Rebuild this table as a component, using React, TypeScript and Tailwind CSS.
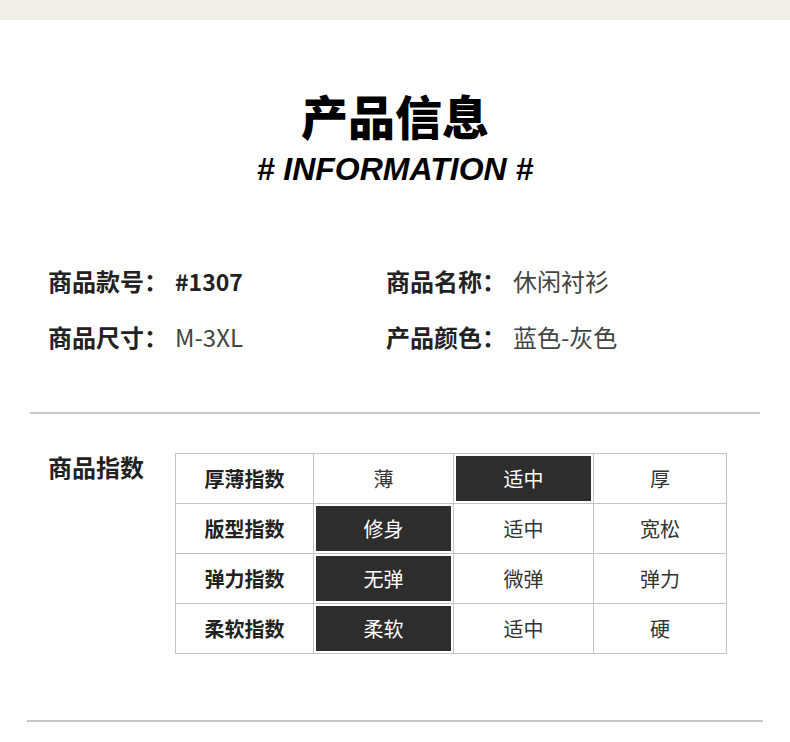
const cjk = "font-['Noto_Sans_CJK_SC','Noto_Sans',sans-serif]";

type Cell = { text: string; on?: boolean };

const rows: { label: string; cells: Cell[] }[] = [
  { label: "厚薄指数", cells: [{ text: "薄" }, { text: "适中", on: true }, { text: "厚" }] },
  { label: "版型指数", cells: [{ text: "修身", on: true }, { text: "适中" }, { text: "宽松" }] },
  { label: "弹力指数", cells: [{ text: "无弹", on: true }, { text: "微弹" }, { text: "弹力" }] },
  { label: "柔软指数", cells: [{ text: "柔软", on: true }, { text: "适中" }, { text: "硬" }] },
];

function InfoItem({ label, value, bold }: { label: string; value: string; bold?: boolean }) {
  return (
    <div className="flex items-center h-[34px]">
      <span className="text-[24px] font-bold text-[#222]">{label}：</span>
      <span className={`ml-[7px] ${bold ? "text-[23px] font-bold text-[#222]" : "text-[24px] text-[#444]"}`}>{value}</span>
    </div>
  );
}

export default function App() {
  return (
    <div className={`w-[790px] h-[742px] bg-white overflow-hidden ${cjk}`}>
      <div className="h-[20px] bg-[#f1ede8]" />

      <div className="flex flex-col items-center pt-[64px]">
        <div className="text-[47px] font-black leading-[62px] text-black">产品信息</div>
        <div className="mt-[3px] text-[32px] font-bold italic leading-[40px] text-black font-['Liberation_Sans',sans-serif]">
          # INFORMATION #
        </div>
      </div>

      <div className="grid grid-cols-[338px_1fr] pl-[48px] pt-[75px] gap-y-[22px]">
        <InfoItem label="商品款号" value="#1307" bold />
        <InfoItem label="商品名称" value="休闲衬衫" />
        <InfoItem label="商品尺寸" value="M-3XL" />
        <InfoItem label="产品颜色" value="蓝色-灰色" />
      </div>

      <div className="mx-[30px] mt-[58px] h-[2px] bg-[#c8c8c8]" />

      <div className="flex pt-[38px]">
        <div className="w-[175px] pl-[48px] text-[24px] font-bold text-[#222] leading-[30px]">商品指数</div>
        <table className="mt-[1px] border-collapse border border-[#b9b9b9]">
          <tbody>
            {rows.map((r) => (
              <tr key={r.label} className="h-[50px]">
                <td className="w-[138px] border border-[#c4c4c4] text-center text-[20px] font-bold text-[#222]">
                  {r.label}
                </td>
                {r.cells.map((c, i) => (
                  <td
                    key={i}
                    className={`${i === 2 ? "w-[133px]" : "w-[140px]"} border border-[#c4c4c4] p-[2px] text-center text-[20px]`}
                  >
                    <div
                      className={`h-[45px] flex items-center justify-center ${
                        c.on ? "bg-[#2d2d2d] text-white" : "text-[#333]"
                      }`}
                    >
                      {c.text}
                    </div>
                  </td>
                ))}
              </tr>
            ))}
          </tbody>
        </table>
      </div>

      <div className="mx-[27px] mt-[66px] h-[2px] bg-[#c8c8c8]" />
    </div>
  );
}
